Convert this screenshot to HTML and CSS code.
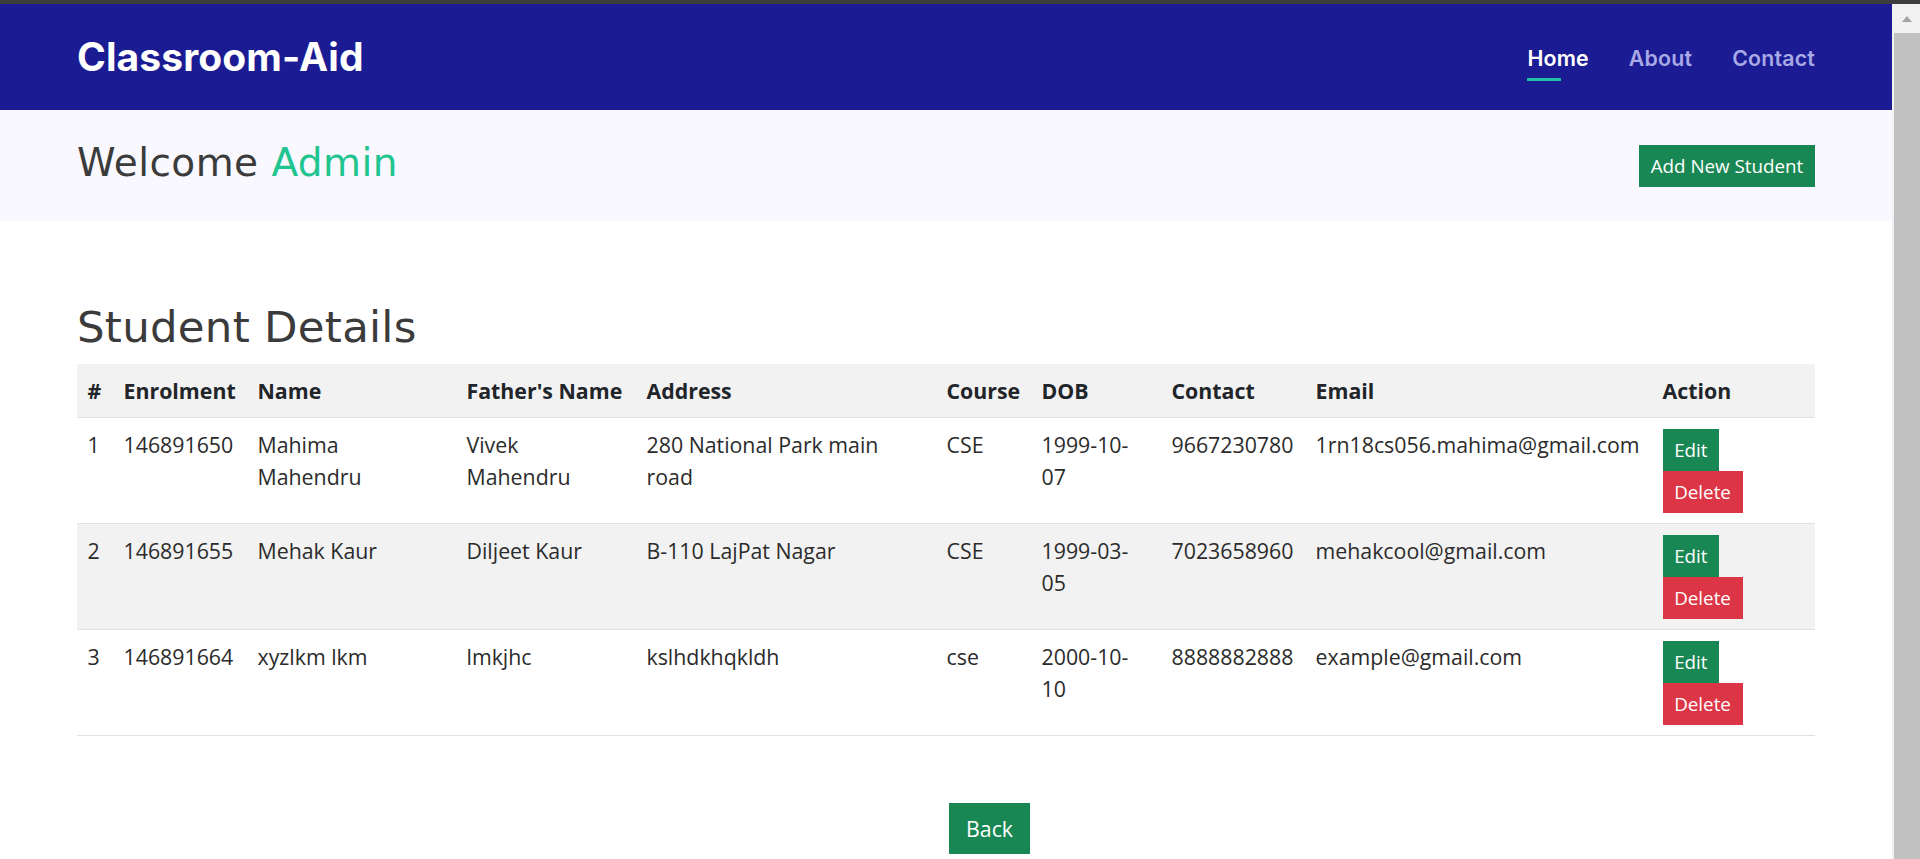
FILE: index.html
```html
<!DOCTYPE html>
<html lang="en">
<head>
<meta charset="utf-8">
<title>Classroom-Aid</title>
<link rel="stylesheet" href="styles.css">
</head>
<body>
<div class="topstrip"></div>
<div class="window">
  <div class="page">
    <header class="navbar">
      <a class="brand" href="#">Classroom-Aid</a>
      <nav class="nav">
        <a class="nav-link active" href="#">Home</a>
        <a class="nav-link" href="#">About</a>
        <a class="nav-link" href="#">Contact</a>
      </nav>
    </header>

    <section class="welcome">
      <h1 class="welcome-title">Welcome <span class="accent">Admin</span></h1>
      <a class="btn btn-success" href="#">Add New Student</a>
    </section>

    <main class="content">
      <h2 class="section-title">Student Details</h2>
      <table class="table">
        <colgroup>
          <col class="c-num"><col class="c-enr"><col class="c-name"><col class="c-father"><col class="c-addr">
          <col class="c-course"><col class="c-dob"><col class="c-contact"><col class="c-email"><col class="c-action">
        </colgroup>
        <thead>
          <tr>
            <th>#</th><th>Enrolment</th><th>Name</th><th>Father's Name</th><th>Address</th>
            <th>Course</th><th>DOB</th><th>Contact</th><th>Email</th><th>Action</th>
          </tr>
        </thead>
        <tbody>
          <tr>
            <td>1</td><td>146891650</td><td>Mahima Mahendru</td><td>Vivek Mahendru</td><td>280 National Park main road</td>
            <td>CSE</td><td>1999-10-07</td><td>9667230780</td><td>1rn18cs056.mahima@gmail.com</td>
            <td><div class="actions"><a class="btn btn-success" href="#">Edit</a><a class="btn btn-danger" href="#">Delete</a></div></td>
          </tr>
          <tr class="striped">
            <td>2</td><td>146891655</td><td>Mehak Kaur</td><td>Diljeet Kaur</td><td>B-110 LajPat Nagar</td>
            <td>CSE</td><td>1999-03-05</td><td>7023658960</td><td>mehakcool@gmail.com</td>
            <td><div class="actions"><a class="btn btn-success" href="#">Edit</a><a class="btn btn-danger" href="#">Delete</a></div></td>
          </tr>
          <tr>
            <td>3</td><td>146891664</td><td>xyzlkm lkm</td><td>lmkjhc</td><td>kslhdkhqkldh</td>
            <td>cse</td><td>2000-10-10</td><td>8888882888</td><td>example@gmail.com</td>
            <td><div class="actions"><a class="btn btn-success" href="#">Edit</a><a class="btn btn-danger" href="#">Delete</a></div></td>
          </tr>
        </tbody>
      </table>
      <div class="back-row">
        <a class="btn btn-back" href="#">Back</a>
      </div>
    </main>
  </div>

  <div class="scrollbar">
    <div class="sb-button">
      <svg width="10" height="6" viewBox="0 0 10 6"><polygon points="5,0 10,6 0,6" fill="#a3a3a3"/></svg>
    </div>
    <div class="sb-thumb"></div>
  </div>
</div>
</body>
</html>
```

FILE: styles.css
```css
* { box-sizing: border-box; }

html, body {
  margin: 0;
  padding: 0;
  height: 100%;
  overflow: hidden;
  background: #ffffff;
  font-family: "Open Sans", "Liberation Sans", sans-serif;
  color: #212529;
}

a { text-decoration: none; }

.topstrip {
  height: 4px;
  background: #3d3d3d;
}

.window {
  display: flex;
  height: 855px;
}

.page {
  flex: 1;
  min-width: 0;
  overflow: hidden;
}

/* ---------- navbar ---------- */
.navbar {
  height: 106px;
  background: #1b1c93;
  padding: 0 77px 0 77px;
  display: flex;
  align-items: center;
  justify-content: space-between;
}

.brand {
  font-family: "Inter", "DejaVu Sans", sans-serif;
  font-weight: 700;
  font-size: 39px;
  letter-spacing: 0.1px;
  color: #ffffff;
  line-height: 48px;
}

.nav {
  display: flex;
  gap: 40px;
}

.nav-link {
  font-family: "Inter", "DejaVu Sans", sans-serif;
  font-weight: 600;
  font-size: 21.3px;
  letter-spacing: 0.2px;
  line-height: 24px;
  color: #a8a9e6;
  display: flex;
  flex-direction: column;
  padding-top: 13px;
  gap: 8px;
}

.nav-link::after {
  content: "";
  display: block;
  width: 34px;
  height: 3px;
  background: transparent;
}

.nav-link.active { color: #ffffff; }
.nav-link.active::after { background: #20c0a3; }

/* ---------- welcome band ---------- */
.welcome {
  height: 111px;
  background: #f8f8fe;
  padding: 0 77px;
  display: flex;
  align-items: center;
  justify-content: space-between;
}

.welcome-title {
  margin: 0 0 4px 0;
  font-family: "DejaVu Sans", sans-serif;
  font-weight: 400;
  font-size: 39px;
  letter-spacing: 0.45px;
  line-height: 1.2;
  color: #3b3b3b;
}

.accent { color: #20c48f; }

/* ---------- buttons ---------- */
.btn {
  display: inline-block;
  font-family: "Open Sans", "Liberation Sans", sans-serif;
  font-size: 18.8px;
  line-height: 28px;
  padding: 7px 11.7px;
  color: #ffffff;
  white-space: nowrap;
}

.btn-success { background: #198754; }
.btn-danger { background: #dc3545; }

.btn-back {
  background: #198754;
  font-size: 21.33px;
  line-height: 32px;
  padding: 9.5px 17px;
}

/* ---------- content ---------- */
.content {
  padding: 80px 77px 0 77px;
}

.section-title {
  margin: 0 0 11px 0;
  font-family: "DejaVu Sans", sans-serif;
  font-weight: 400;
  font-size: 43.5px;
  letter-spacing: 0.25px;
  line-height: 1.2;
  color: #3b3b3b;
}

.table {
  width: 100%;
  border-collapse: collapse;
  table-layout: fixed;
  font-size: 21.33px;
  line-height: 32px;
}

.c-num { width: 36px; }
.c-enr { width: 134px; }
.c-name { width: 209px; }
.c-father { width: 180px; }
.c-addr { width: 300px; }
.c-course { width: 95px; }
.c-dob { width: 130px; }
.c-contact { width: 144px; }
.c-email { width: 347px; }
.c-action { width: 163px; }

.table th,
.table td {
  padding: 10.5px;
  text-align: left;
  vertical-align: top;
  border-bottom: 1px solid #dee2e6;
}

.table th {
  font-weight: 700;
  white-space: nowrap;
  color: #212529;
}

.table thead tr { background: #f2f2f2; }
.table tr.striped { background: #f2f2f2; }

.table td { color: #2b2b2b; }

.actions {
  display: flex;
  flex-direction: column;
  align-items: flex-start;
}

.back-row {
  padding: 67px 0 0 872px;
}

/* ---------- scrollbar ---------- */
.scrollbar {
  width: 28px;
  background: #f1f1f1;
  display: flex;
  flex-direction: column;
}

.sb-button {
  height: 29px;
  display: flex;
  align-items: center;
  justify-content: center;
  padding-left: 2px;
}

.sb-thumb {
  flex: 1;
  margin-left: 2px;
  background: #c1c1c1;
}
```
